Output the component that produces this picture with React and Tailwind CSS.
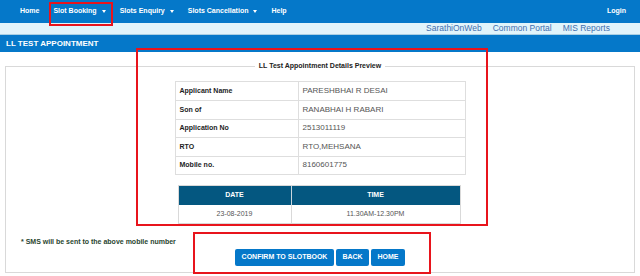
import React from "react";

const Caret = () => (
  <span className="inline-block ml-[5px] align-middle w-0 h-0 border-l-[2.5px] border-r-[2.5px] border-t-[3px] border-l-transparent border-r-transparent border-t-white" />
);

const rows = [
  ["Applicant Name", "PARESHBHAI R DESAI"],
  ["Son of", "RANABHAI H RABARI"],
  ["Application No", "2513011119"],
  ["RTO", "RTO,MEHSANA"],
  ["Mobile no.", "8160601775"],
];

export default function App() {
  return (
    <div className="relative w-[640px] h-[276px] bg-white overflow-hidden font-['Liberation_Sans',Arial,sans-serif]">
      {/* top nav */}
      <div className="h-[23px] bg-[#0578c9] flex items-center pl-[13px] pr-[14px] text-white text-[7px] font-bold">
        <span className="px-[7px]">Home</span>
        <span className="px-[7px]">Slot Booking<Caret /></span>
        <span className="px-[7px]">Slots Enquiry<Caret /></span>
        <span className="px-[7px]">Slots Cancellation<Caret /></span>
        <span className="px-[7px]">Help</span>
        <span className="ml-auto">Login</span>
      </div>
      {/* light strip */}
      <div className="h-[12px] bg-[#e1f4fb] border-b border-[#a9cfe3] flex items-center justify-end pr-[30px] text-[8.5px] text-[#3f6eae] gap-[11px]">
        <span>SarathiOnWeb</span>
        <span>Common Portal</span>
        <span>MIS Reports</span>
      </div>
      {/* header bar */}
      <div className="h-[17px] bg-[#0578c9] flex items-center px-[6px] text-white text-[8px] font-bold">
        LL TEST APPOINTMENT
      </div>

      {/* panel */}
      <fieldset className="mx-[5px] mt-[9px] h-[212px] border border-[#d9d9d9] flex flex-col">
        <legend className="mx-auto px-[4px] text-[7px] font-bold text-[#222] leading-[10px]">
          LL Test Appointment Details Preview
        </legend>
        <div className="pt-[10px] flex flex-col items-center">
          <div className="w-[291px] border border-[#dedede]">
            {rows.map(([k, v], i) => (
              <div key={k} className={`grid grid-cols-[123px_1fr] h-[18.4px] ${i ? "border-t border-[#dedede]" : ""}`}>
                <div className="flex items-center pl-[4px] text-[7px] font-bold text-[#1d1d1d] border-r border-[#dedede]">{k}</div>
                <div className="flex items-center pl-[4px] text-[8px] text-[#555]">{v}</div>
              </div>
            ))}
          </div>
          <div className="mt-[10px] w-[283px] ml-[-2px] border border-[#d9d9d9] text-[7px]">
            <div className="grid grid-cols-[113px_1fr] h-[19px] bg-[#045780] text-white font-bold">
              <div className="flex items-center justify-center border-r border-[#c9d6de]">DATE</div>
              <div className="flex items-center justify-center">TIME</div>
            </div>
            <div className="grid grid-cols-[113px_1fr] h-[18px] text-[#555]">
              <div className="flex items-center justify-center border-r border-[#d9d9d9]">23-08-2019</div>
              <div className="flex items-center justify-center">11.30AM-12.30PM</div>
            </div>
          </div>
        </div>
        <div className="mt-[13px] pl-[15px] text-[7px] font-bold text-[#29452f] leading-[9px]">
          * SMS will be sent to the above mobile number
        </div>
        <div className="mt-[3px] flex justify-center gap-[2px] text-white text-[7px] font-bold">
          <button className="h-[17px] w-[99px] bg-[#0578c9] rounded-[2px]">CONFIRM TO SLOTBOOK</button>
          <button className="h-[17px] w-[33px] bg-[#0578c9] rounded-[2px]">BACK</button>
          <button className="h-[17px] w-[34px] bg-[#0578c9] rounded-[2px]">HOME</button>
        </div>
      </fieldset>

      {/* red annotation boxes */}
      <div className="absolute left-[49px] top-[2px] w-[64px] h-[24px] border-2 border-[#e8141c]" />
      <div className="absolute left-[136px] top-[48px] w-[352px] h-[178px] border-2 border-[#e8141c]" />
      <div className="absolute left-[193px] top-[232px] w-[238px] h-[42px] border-2 border-[#e8141c]" />
    </div>
  );
}
